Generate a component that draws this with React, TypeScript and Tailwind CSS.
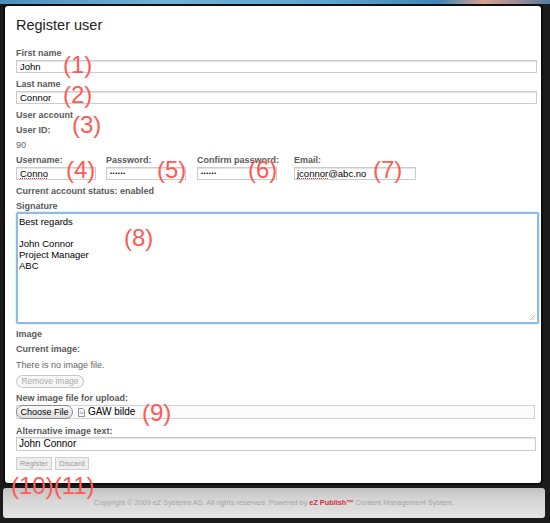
import React from "react";

const F = { fontFamily: '"Liberation Sans", Arial, sans-serif' };

function Label({ children, mt }: { children: React.ReactNode; mt: string }) {
  return (
    <div className={`${mt} h-[12px] text-[9px] leading-[12px] font-bold text-[#5a5a5a] whitespace-nowrap`}>{children}</div>
  );
}

function Input({ value, w, mt, red, dots }: { value: string; w: string; mt: string; red?: boolean; dots?: boolean }) {
  return (
    <div
      className={`${mt} ${w} h-[13px] border border-[#c9cdd2] bg-white shadow-[inset_0_1px_1px_rgba(0,0,0,0.12)] ${dots ? "text-[6px] tracking-[0.5px]" : "text-[9.5px]"} leading-[11px] pl-[3px] text-black whitespace-nowrap overflow-hidden`}
    >
      {red ? <span className="underline decoration-dotted decoration-[#e03030]">{value}</span> : value}
    </div>
  );
}

function Num({ t, x, y }: { t: string; x: number; y: number }) {
  return (
    <div
      className="absolute text-[24px] leading-[26px] text-[#ff5a55] whitespace-nowrap"
      style={{ left: x, top: y }}
    >
      {t}
    </div>
  );
}

export default function App() {
  return (
    <div className="relative w-[550px] h-[523px] bg-[#1b1b1b] overflow-hidden flex flex-col" style={F}>
      <div className="h-[4px] w-full bg-[linear-gradient(90deg,#4b8fc0,#6fb3d8_30%,#5aa6d2_60%,#3e86b8_80%,#d9a090_88%,#5a7aa0)]" />
      <div className="ml-[3px] w-[540px] h-[481px] border-2 border-[#0d0d0d] rounded-[5px] bg-white pl-[11px] flex flex-col">
        <div className="mt-[8px] h-[22px] text-[14.5px] leading-[22px] text-[#222]">Register user</div>
        <Label mt="mt-[11px]">First name</Label>
        <Input mt="mt-[1px]" w="w-[521px]" value="John" />
        <Label mt="mt-[5px]">Last name</Label>
        <Input mt="mt-[1px]" w="w-[521px]" value="Connor" />
        <Label mt="mt-[5px]">User account</Label>
        <Label mt="mt-[3px]">User ID:</Label>
        <div className="mt-[3px] h-[12px] text-[9px] leading-[12px] text-[#666]">90</div>
        <div className="mt-[3px] flex">
          <div className="w-[90px]">
            <Label mt="mt-0">Username:</Label>
            <Input mt="mt-[1px]" w="w-[80px]" value="Conno" red />
          </div>
          <div className="w-[91px]">
            <Label mt="mt-0">Password:</Label>
            <Input mt="mt-[1px]" w="w-[80px]" value="••••••" dots />
          </div>
          <div className="w-[97px]">
            <Label mt="mt-0">Confirm password:</Label>
            <Input mt="mt-[1px]" w="w-[80px]" value="••••••" dots />
          </div>
          <div className="w-[122px]">
            <Label mt="mt-0">Email:</Label>
            <div className="mt-[1px] w-[122px] h-[13px] border border-[#c9cdd2] bg-white shadow-[inset_0_1px_1px_rgba(0,0,0,0.12)] text-[9.5px] leading-[11px] pl-[2px] text-black whitespace-nowrap overflow-hidden">
              <span className="underline decoration-dotted decoration-[#e03030]">jconnor</span>@abc.no
            </div>
          </div>
        </div>
        <Label mt="mt-[5px]">Current account status: enabled</Label>
        <Label mt="mt-[3px]">Signature</Label>
        <div className="relative w-[523px] h-[112px] border-2 border-[#8dbbe6] rounded-[2px] shadow-[0_0_2px_#a6caee] bg-white pl-[1px] pt-[2px] text-[9.5px] leading-[11px] text-black">
          <div>Best regards</div>
          <div>&nbsp;</div>
          <div>John Connor</div>
          <div>Project Manager</div>
          <div>ABC</div>
          <svg className="absolute right-[1px] bottom-[1px]" width="7" height="7" viewBox="0 0 7 7">
            <path d="M6 1L1 6M6 3.5L3.5 6" stroke="#aaa" strokeWidth="0.8" />
          </svg>
        </div>
        <Label mt="mt-[4px]">Image</Label>
        <Label mt="mt-[3px]">Current image:</Label>
        <div className="mt-[4px] h-[12px] text-[9px] leading-[12px] text-[#666]">There is no image file.</div>
        <div className="mt-[4px] w-[68px] h-[13px] rounded-full border border-[#c4c4c4] bg-[#f7f7f7] text-[8.5px] leading-[11px] text-[#aaa] text-center">
          Remove image
        </div>
        <Label mt="mt-[4px]">New image file for upload:</Label>
        <div className="mt-[1px] w-[519px] h-[14px] border border-[#d2d2d2] bg-[#fbfbfb] flex items-center">
          <div className="-ml-px w-[57px] h-[14px] rounded-full border border-[#8a8a8a] bg-[linear-gradient(#fdfdfd,#dedede)] text-[9px] leading-[12px] text-black text-center">
            Choose File
          </div>
          <svg className="ml-[5px]" width="7" height="9" viewBox="0 0 7 9">
            <path d="M0.5 0.5H4.5L6.5 2.5V8.5H0.5Z" fill="#fff" stroke="#777" strokeWidth="0.8" />
            <path d="M1.5 4H5.5M1.5 5.5H5.5" stroke="#888" strokeWidth="0.6" />
          </svg>
          <span className="ml-[3px] text-[10px] leading-[12px] text-black">GAW bilde</span>
        </div>
        <Label mt="mt-[6px]">Alternative image text:</Label>
        <div className="w-[520px] h-[14px] border border-[#c9cdd2] bg-white shadow-[inset_0_1px_1px_rgba(0,0,0,0.12)] text-[10px] leading-[12px] pl-[2px] text-black">
          John Connor
        </div>
        <div className="mt-[6px] flex gap-[3px]">
          <div className="w-[36px] h-[13px] border border-[#cfcfcf] bg-[#eeeeee] text-[7.5px] leading-[11px] text-[#9a9a9a] text-center">Register</div>
          <div className="w-[34px] h-[13px] border border-[#cfcfcf] bg-[#eeeeee] text-[7.5px] leading-[11px] text-[#9a9a9a] text-center">Discard</div>
        </div>
      </div>
      <div className="mt-[3px] ml-[3px] w-[542px] h-[30px] rounded-[3px] bg-[linear-gradient(#c3c3c3,#d6d6d6_40%,#e4e4e4)] flex items-center justify-center text-[7.3px] text-[#a3a3a3] whitespace-nowrap">
        Copyright © 2009 eZ Systems AS. All rights reserved. Powered by&nbsp;<span className="font-bold text-[#d23030]">eZ Publish™</span>&nbsp;Content Management System.
      </div>

      <Num t="(1)" x={63} y={52} />
      <Num t="(2)" x={63} y={82} />
      <Num t="(3)" x={72} y={112} />
      <Num t="(4)" x={66} y={157} />
      <Num t="(5)" x={157} y={157} />
      <Num t="(6)" x={248} y={157} />
      <Num t="(7)" x={373} y={157} />
      <Num t="(8)" x={124} y={225} />
      <Num t="(9)" x={142} y={400} />
      <Num t="(10)(11)" x={11} y={473} />
    </div>
  );
}
